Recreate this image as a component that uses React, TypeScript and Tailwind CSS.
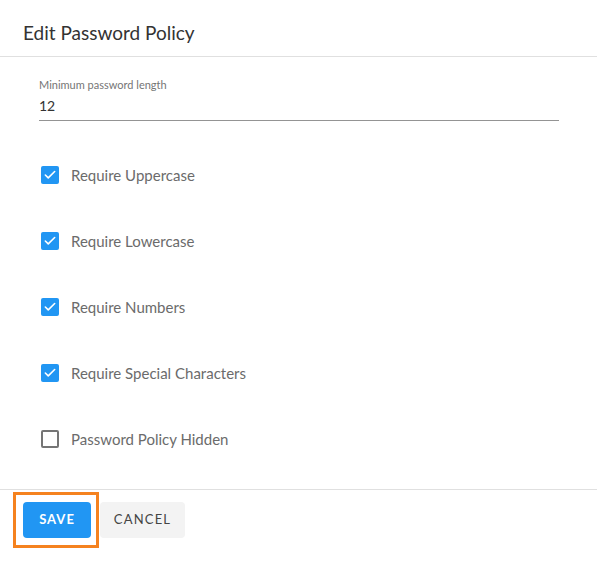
import { Check } from "lucide-react";

const options = [
  { label: "Require Uppercase", checked: true },
  { label: "Require Lowercase", checked: true },
  { label: "Require Numbers", checked: true },
  { label: "Require Special Characters", checked: true },
  { label: "Password Policy Hidden", checked: false },
];

function Box({ checked }: { checked: boolean }) {
  if (checked) {
    return (
      <span className="flex h-[18px] w-[18px] items-center justify-center rounded-[2px] bg-[#2196f3]">
        <Check className="h-[14px] w-[14px] text-white" strokeWidth={2.75} />
      </span>
    );
  }
  return <span className="h-[18px] w-[18px] rounded-[2px] border-2 border-[#757575]" />;
}

export default function App() {
  return (
    <div className="h-[561px] w-[597px] bg-white font-['Lato',sans-serif] text-[#333]">
      <div className="flex h-[57px] items-center border-b border-[#e0e0e0] px-[23px] pt-[8px]">
        <h1 className="text-[19px] font-normal leading-none text-[#333]">Edit Password Policy</h1>
      </div>

      <div className="h-[432px] pl-[39px] pr-[38px]">
        <div className="pt-[21px]">
          <label className="block text-[11px] leading-[14px] text-[#757575]">
            Minimum password length
          </label>
          <div className="flex h-[29px] items-center border-b border-[#949494] pb-[2px] text-[14px]">
            12
          </div>
        </div>

        <div className="mt-[21px] flex flex-col">
          {options.map((o) => (
            <div key={o.label} className="flex h-[66px] items-center gap-[12px] pl-[2px]">
              <Box checked={o.checked} />
              <span className="text-[15px] text-[#6b6b6b]">{o.label}</span>
            </div>
          ))}
        </div>
      </div>

      <div className="flex gap-[9px] border-t border-[#e0e0e0] px-[23px] pt-[12px]">
        <div className="relative">
          <button className="h-[36px] w-[68px] rounded-[4px] bg-[#2196f3] text-[13px] font-bold tracking-[1px] text-white">
            SAVE
          </button>
          <span className="pointer-events-none absolute -bottom-[10px] -left-[10px] -right-[8px] -top-[10px] border-[3px] border-[#f5821f]" />
        </div>
        <button className="h-[36px] w-[85px] rounded-[4px] bg-[#f3f3f3] text-[13px] font-normal tracking-[1.2px] text-[#444]">
          CANCEL
        </button>
      </div>
    </div>
  );
}
